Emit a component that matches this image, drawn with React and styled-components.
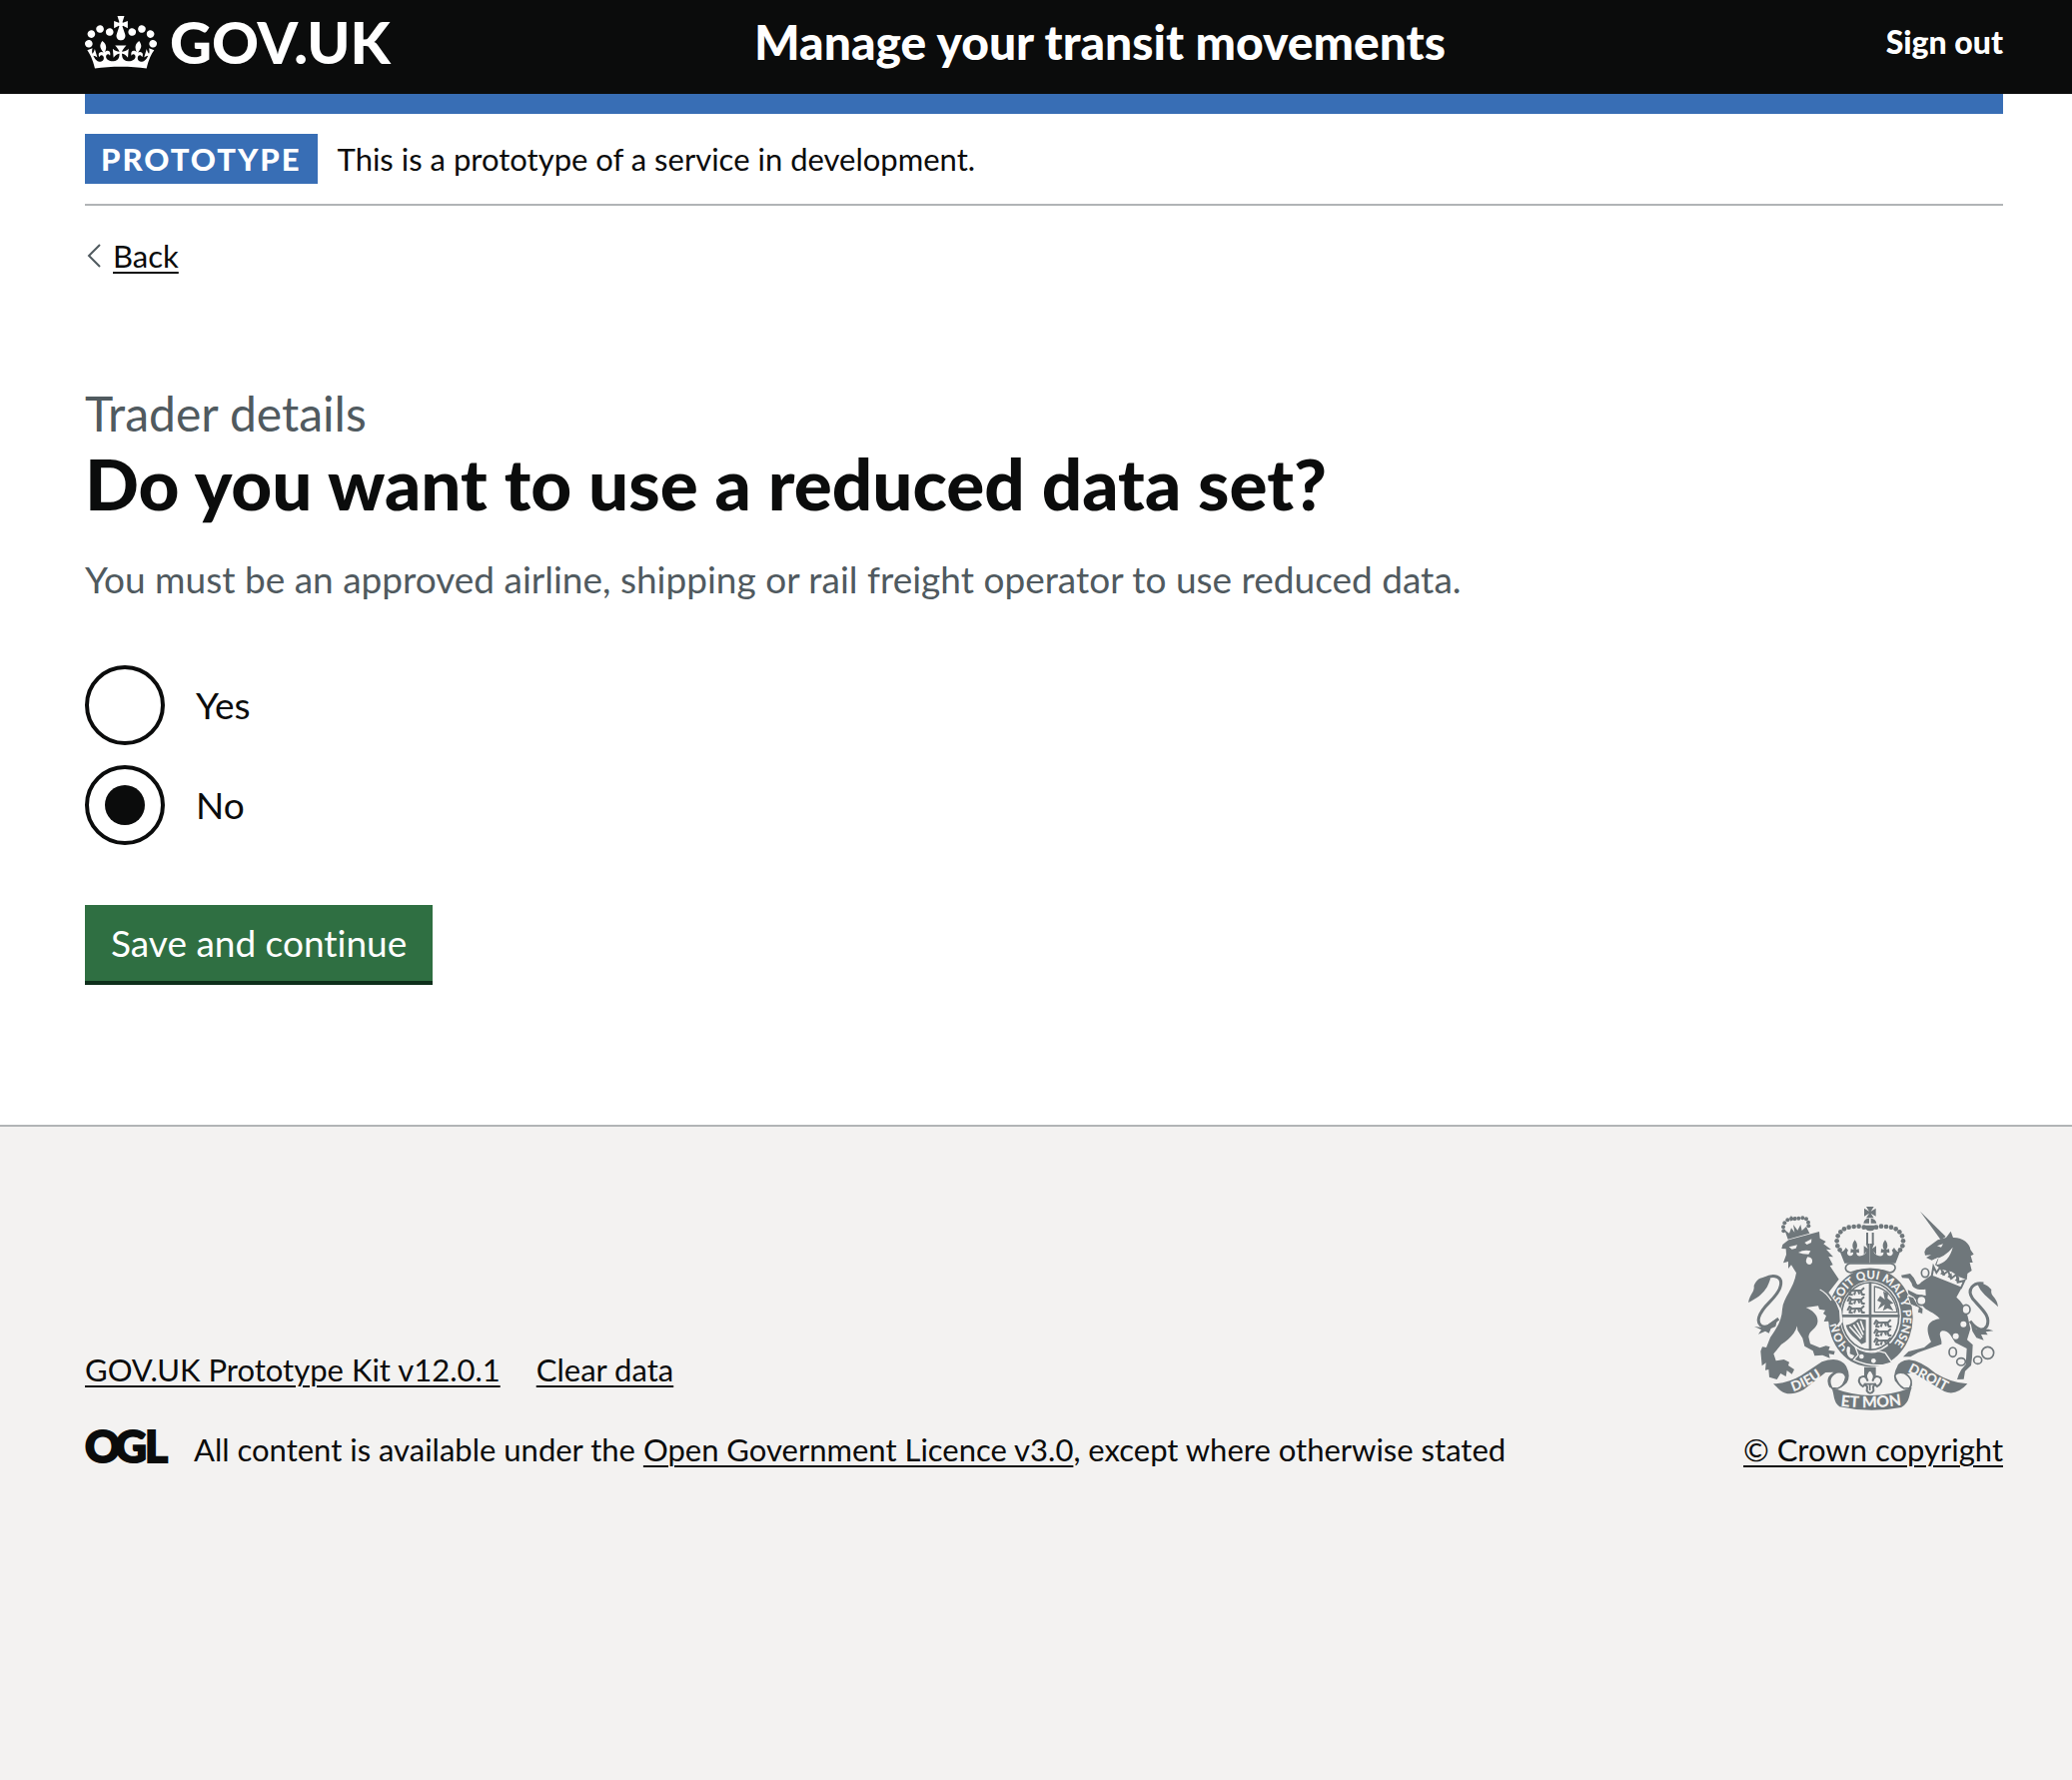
import React from "react";
import styled, { createGlobalStyle } from "styled-components";

const ink = "#0b0c0c";
const blue = "#386eb5";
const grey = "#505a5f";
const rule = "#b1b4b6";
const paper = "#f3f2f1";
const crestGrey = "#6f777b";
const family = 'Lato, "Liberation Sans", sans-serif';

const GlobalStyle = createGlobalStyle`
  *, *::before, *::after { box-sizing: border-box; }
  html { background: ${paper}; }
  body {
    margin: 0;
    background: #fff;
    color: ${ink};
    font-family: ${family};
    font-size: 31px;
    font-variant-ligatures: none;
    line-height: 40px;
  }
  h1, p, ul, fieldset { margin: 0; padding: 0; border: 0; }
`;

const Container = styled.div`
  margin: 0 69px 0 85px;
`;

const Header = styled.header`
  background: ${ink};
  color: #fff;
`;

const HeaderRow = styled(Container)`
  display: grid;
  grid-template-columns: 1fr 2fr;
  align-items: center;
  height: 94px;
  padding-bottom: 10px;
`;

const LogoLink = styled.a`
  display: flex;
  align-items: center;
  gap: 13px;
  color: #fff;
  font-size: 58px;
  font-weight: 900;
  line-height: 70px;
  text-decoration: none;
`;

const HeaderContent = styled.div`
  display: flex;
  align-items: center;
  justify-content: space-between;
  padding-left: 30px;
`;

const HeaderLink = styled.a`
  color: #fff;
  font-size: ${(p) => (p.$title ? 48 : 32)}px;
  font-weight: 900;
  line-height: 60px;
  text-decoration: none;
`;

const BlueBar = styled.div`
  height: 20px;
  background: ${blue};
`;

const PhaseBanner = styled.div`
  display: flex;
  align-items: center;
  gap: 20px;
  padding: 20px 0;
  border-bottom: 2px solid ${rule};
`;

const Tag = styled.strong`
  padding: 0 16px;
  background: ${blue};
  color: #fff;
  font-weight: 900;
  line-height: 50px;
  letter-spacing: 2px;
`;

const Link = styled.a`
  color: ${ink};
  text-decoration: underline;
  text-decoration-thickness: 2px;
  text-underline-offset: 4px;
`;

const BackRow = styled.nav`
  display: flex;
  align-items: center;
  gap: 11px;
  padding-top: 30px;
`;

const Main = styled.main`
  padding: 108px 0 140px;
`;

const Caption = styled.span`
  display: block;
  color: ${grey};
  font-size: 48px;
  font-weight: 400;
  line-height: 60px;
`;

const Heading = styled.h1`
  font-size: 71px;
  font-weight: 900;
  line-height: 80px;
`;

const Hint = styled.p`
  padding: 26px 0 56px;
  color: ${grey};
  font-size: 37px;
  line-height: 60px;
`;

const Radios = styled.div`
  display: grid;
  gap: 20px;
`;

const RadioLabel = styled.label`
  display: flex;
  align-items: center;
  gap: 31px;
  font-size: 37px;
  line-height: 80px;
`;

const Radio = styled.input`
  appearance: none;
  display: grid;
  place-items: center;
  width: 80px;
  height: 80px;
  margin: 0;
  border: 4px solid ${ink};
  border-radius: 50%;
  background: #fff;

  &:checked::before {
    content: "";
    width: 40px;
    height: 40px;
    border-radius: 50%;
    background: ${ink};
  }
`;

const SaveButton = styled.button`
  margin-top: 60px;
  padding: 0 26px;
  border: 0;
  border-bottom: 4px solid #0e2f1b;
  background: #2f6f42;
  color: #fff;
  font-family: inherit;
  font-size: 37px;
  font-variant-ligatures: none;
  line-height: 76px;
`;

const Footer = styled.footer`
  min-height: 600px;
  border-top: 2px solid ${rule};
  background: ${paper};
`;

const FooterRow = styled(Container)`
  display: flex;
  align-items: flex-end;
  justify-content: space-between;
  padding-top: 80px;
`;

const FooterLinks = styled.ul`
  display: flex;
  gap: 36px;
  margin-bottom: 40px;
  list-style: none;
`;

const Licence = styled.div`
  display: flex;
  align-items: center;
  gap: 25px;

  svg { margin: -10px 0; }
`;

const Copyright = styled.div`
  display: grid;
  justify-items: center;
  gap: 19px;
`;

function Crown() {
  return (
    <svg width="72" height="53" viewBox="0 0 132 97" fill="currentColor" aria-hidden="true">
      <path d="M25 30.2c3.5 1.5 7.7-.2 9.1-3.7 1.5-3.6-.2-7.8-3.9-9.2-3.6-1.4-7.6.3-9.1 3.9-1.4 3.5.3 7.5 3.9 9zM9 39.5c3.6 1.5 7.8-.2 9.2-3.7 1.5-3.6-.2-7.8-3.9-9.1-3.6-1.5-7.6.2-9.1 3.8-1.4 3.5.3 7.5 3.8 9zM4.4 57.2c3.5 1.5 7.7-.2 9.1-3.8 1.5-3.6-.2-7.7-3.9-9.1-3.5-1.5-7.6.3-9.1 3.8-1.4 3.5.3 7.6 3.9 9.1zm38.3-21.4c3.5 1.5 7.7-.2 9.1-3.8 1.5-3.6-.2-7.7-3.9-9.1-3.6-1.5-7.6.3-9.1 3.8-1.3 3.6.4 7.7 3.9 9.1zm64.4-5.6c-3.6 1.5-7.8-.2-9.1-3.7-1.5-3.6.2-7.8 3.8-9.2 3.6-1.4 7.7.3 9.2 3.9 1.3 3.5-.4 7.5-3.9 9zm15.9 9.3c-3.6 1.5-7.7-.2-9.1-3.7-1.5-3.6.2-7.8 3.7-9.1 3.6-1.5 7.7.2 9.2 3.8 1.5 3.5-.3 7.5-3.8 9zm4.7 17.7c-3.6 1.5-7.8-.2-9.2-3.8-1.5-3.6.2-7.7 3.9-9.1 3.6-1.5 7.7.3 9.2 3.8 1.3 3.5-.4 7.6-3.9 9.1zM89.3 35.8c-3.6 1.5-7.8-.2-9.2-3.8-1.4-3.6.2-7.7 3.9-9.1 3.6-1.5 7.7.3 9.2 3.8 1.4 3.6-.3 7.7-3.9 9.1zM69.7 17.7l8.9 4.7V9.3l-8.9 2.8c-.2-.3-.5-.6-.9-.9L72.4 0H59.6l3.5 11.2c-.3.3-.6.5-.9.9l-8.8-2.8v13.1l8.8-4.7c.3.3.6.7.9.9l-5 15.4v.1c-.2.8-.4 1.6-.4 2.4 0 4.1 3.1 7.5 7 8.1h.2c.3 0 .7.1 1 .1.4 0 .7 0 1-.1h.2c4-.6 7.1-4.1 7.1-8.1 0-.8-.1-1.7-.4-2.4V34l-5.1-15.4c.4-.2.7-.6 1-.9zM66 92.8c16.9 0 32.8 1.1 47.1 3.2 4-16.9 8.9-26.7 14-33.5l-9.6-3.4c1 4.9 1.1 7.2 0 10.2-1.5-1.4-3-4.3-4.2-8.7L108.6 76c2.8-2 5-3.2 7.5-3.3-4.4 9.4-10 11.9-13.6 11.2-4.3-.8-6.3-4.6-5.6-7.9 1-4.7 5.7-5.9 8-.5 4.3-8.7-3-11.4-7.6-8.8 7.1-7.2 7.9-13.5 2.1-21.1-8 6.1-8.1 12.3-4.5 20.8-4.7-5.4-12.1-2.5-9.5 6.2 3.4-5.2 7.9-2 7.2 3.1-.6 4.3-6.4 7.8-13.5 7.2-10.3-.9-10.9-8-11.2-13.8 2.5-.5 7.1 1.8 11 7.3L80.2 60c-4.1 4.4-8 5.3-12.3 5.4 1.4-4.4 8-11.6 8-11.6H55.5s6.4 7.2 7.9 11.6c-4.2-.1-8-1-12.3-5.4l1.4 16.4c3.9-5.5 8.5-7.7 10.9-7.3-.3 5.8-.9 12.8-11.1 13.8-7.2.6-12.9-2.9-13.5-7.2-.7-5 3.8-8.3 7.1-3.1 2.7-8.7-4.6-11.6-9.4-6.2 3.7-8.5 3.6-14.7-4.6-20.8-5.8 7.6-5 13.9 2.2 21.1-4.7-2.6-11.9.1-7.7 8.8 2.3-5.5 7.1-4.2 8.1.5.7 3.3-1.3 7.1-5.7 7.9-3.5.7-9-1.8-13.5-11.2 2.5.1 4.7 1.3 7.5 3.3l-4.7-15.4c-1.2 4.4-2.7 7.2-4.3 8.7-1.1-3-.9-5.3 0-10.2l-9.5 3.4c5 6.9 9.9 16.7 14 33.5 14.8-2.1 30.8-3.2 47.7-3.2z" />
    </svg>
  );
}

function OglLogo() {
  return (
    <svg width="84" height="60" viewBox="-1 -10 84 60" fill={ink} stroke={ink} strokeWidth="2" fontFamily={family} fontSize="44" fontWeight="900" role="img" aria-label="Open Government Licence">
      <text x="-1 29 59" y="33">OGL</text>
    </svg>
  );
}

const archDots = [
  [404, 116], [389, 113], [374, 114], [359, 116], [345, 121], [334, 130], [326, 142], [323, 157], [325, 172], [332, 184],
];

// One half of the royal crown; the other is its mirror image.
function CrownHalf() {
  return (
    <g>
      {archDots.map(([x, y]) => (
        <circle key={x + "-" + y} cx={x} cy={y} r="7" />
      ))}
      <rect x="411" y="132" width="6" height="34" />
      <path d="M422 224H346L331 186C338 192 343 189 350 177L357 185C352 191 353 197 359 201C367 204 373 199 372 191L364 193L365 181L374 183C367 174 370 163 377 154C384 163 387 174 380 183L389 181L390 193L382 191C381 199 387 204 396 202C406 199 410 194 412 188L404 198V172L416 180L410 165H422Z" />
    </g>
  );
}

function Lions({ x, y }) {
  return (
    <g transform={`translate(${x} ${y})`} fill="none" stroke={crestGrey} strokeWidth="6" strokeLinejoin="round">
      {[0, 27, 54].map((dy) => (
        <path key={dy} d={`M4 ${dy + 14}L10 ${dy + 2}L18 ${dy + 9}L46 ${dy + 7}L54 ${dy}M14 ${dy + 9}L10 ${dy + 20}L20 ${dy + 21}M28 ${dy + 9}L24 ${dy + 21}M43 ${dy + 8}L48 ${dy + 20}L56 ${dy + 20}M36 ${dy + 9}L40 ${dy + 19}`} />
      ))}
    </g>
  );
}

function Garter() {
  return (
    <g>
      <ellipse cx="424" cy="387" rx="127" ry="148" />
      <ellipse cx="424" cy="384" rx="92" ry="107" fill={paper} />
      <ellipse cx="423" cy="383" rx="86" ry="101" fill="none" stroke={crestGrey} strokeWidth="5" />
      <g fill={paper} fontSize="35">
        <text><textPath href="#garterTop">SOIT QUI MAL Y PENSE</textPath></text>
        <text><textPath href="#garterLeft">HON</textPath></text>
      </g>
      <path d="M336 378H511V386H427V485H419V386H336Z" />
      <path d="M419 281H427V378H419Z" />
      <Lions x={351} y={298} />
      <Lions x={431} y={394} />
      <path d="M436 294C472 300 498 329 504 371H436Z" fill="none" stroke={crestGrey} strokeWidth="4" />
      <path d="M446 362L456 342L444 336L453 322L467 333L462 309L477 314L475 329L493 344L482 347L493 367L475 359L461 367L467 348Z" />
      <path d="M350 410C366 408 377 400 387 391L410 394V461L397 467C381 449 357 438 350 410Z" />
      <path d="M361 414L395 451M373 409L399 447M384 402L402 439M394 397L404 425" stroke={paper} strokeWidth="5" />
      <path d="M366 476Q350 462 349 487Q352 513 371 514L380 500L365 494Z" fill={paper} stroke={crestGrey} strokeWidth="6" />
      <path d="M378 475L393 484Q425 497 448 488L468 493L488 522Q435 542 374 514L387 499Z" stroke={paper} strokeWidth="4" />
      <circle cx="397" cy="504" r="7" fill={paper} />
      <circle cx="433" cy="517" r="7" fill={paper} />
    </g>
  );
}

function Lion() {
  return (
    <g>
      <path d="M57 342C63 312 76 313 74 291C84 266 102 263 124 268C118 288 110 318 57 342Z" />
      <path d="M105 270C135 255 160 264 154 291C147 329 100 347 89 386C83 408 99 421 119 411L148 391" fill="none" stroke={crestGrey} strokeWidth="9" />
      <path d="M75 414L104 418L145 388L139 414L125 420L119 434L108 428L87 437L96 424Z" />
      <path d="M331 272L306 300M274 303C300 316 323 345 332 367L335 399L324 413" fill="none" stroke={paper} strokeWidth="10" />
      <path d="M160 168L178 154L270 129L272 149L290 159L283 166L306 183L291 182L312 205L298 204L311 229L302 232L329 272L298 312L320 342L330 367L332 398L323 411L317 402L305 411L298 398L284 399L291 382L282 375L288 365L270 362L267 352L230 357C249 365 268 380 265 401C263 421 240 424 238 445L243 466L272 478L290 472L302 475L298 485L317 488L314 499L299 496L302 509L280 500L256 502L251 487L226 473L220 449L205 425L203 405L207 370C212 421 190 445 156 468L133 496L140 517L164 513L180 521L177 531L195 543L188 557L173 546L170 564L154 555L143 573L120 566L118 543L108 545L110 523L98 532L94 488L99 475L111 477L123 447C145 416 158 392 159 362C162 327 194 300 201 253L186 229L177 240L177 219L162 223L171 198L170 181L157 180Z" />
      <g fill={paper}>
        <path d="M179 175L204 169L200 179L188 182ZM226 162L247 151L246 162L233 168Z" />
        <path d="M207 192Q224 182 244 187L238 197L221 196ZM235 205Q251 206 249 221Q244 232 234 226Q226 218 235 205Z" />
      </g>
      <path d="M272 303C288 311 297 322 306 336" fill="none" stroke={paper} strokeWidth="4" />
      <path d="M176 152L166 124L180 134L186 118L196 131L192 108L205 125L214 108L218 126L231 114L241 134Z" />
      {[[163, 127], [162, 115], [166, 103], [175, 94], [186, 90], [197, 90], [208, 89], [220, 88], [231, 91], [237, 101], [238, 112]].map(([x, y]) => (
        <circle key={x + "-" + y} cx={x} cy={y} r="6" />
      ))}
      <path d="M185 80L191 88L200 84L198 97L191 94L184 98Z" />
    </g>
  );
}

function Unicorn() {
  return (
    <g>
      <path d="M807 355C804 323 783 326 787 303C773 286 760 284 745 285C754 313 776 325 807 355Z" />
      <path d="M763 285C734 280 711 302 731 331C759 363 785 382 774 412C763 432 742 423 723 398" fill="none" stroke={crestGrey} strokeWidth="9" />
      <path d="M725 405L742 422L779 422L793 427L770 430L776 439L756 438L764 455L742 448L730 428Z" />
      <path d="M573 68L650 144L635 154Z" />
      <path d="M586 190L591 179L626 154L651 147L665 128L672 147C700 146 723 165 724 183L734 197L725 202L731 222L722 222L728 246L715 255L713 274L690 265L668 250L639 243L618 229L628 206L608 215L591 207L606 199L588 200Z" />
      <path d="M624 172L642 166L636 176Z" fill={paper} />
      <path d="M608 215Q648 206 671 176Q660 221 622 229L629 207Z" fill={paper} />
      <path d="M613 234L622 252L634 235L643 258L657 247L666 270L683 257L686 281L706 276L696 298L608 263Z" fill={paper} stroke={crestGrey} strokeWidth="6" />
      <path d="M633 256L644 246L648 262ZM655 265L667 253L670 272ZM677 275L690 263L691 281Z" />
      <path d="M606 260L697 299L682 326C714 353 717 389 724 421L714 454L731 469L729 506L726 531L708 548L704 572L684 573L689 558L697 543L710 528L713 480L678 462C663 440 661 428 641 427C622 432 641 453 637 467L567 492L544 505L522 505L538 489L585 477L606 460C585 413 598 396 632 391C617 371 589 367 580 351L550 324L538 316L536 304L563 317L590 321L589 302C570 306 549 300 548 285L538 269L519 268L516 260L543 255L554 268L565 289Z" />
      <path d="M535 321L553 326L566 349L582 360L581 377L565 372L568 358L544 348Z" stroke={paper} strokeWidth="3" />
      <g fill={paper} stroke={crestGrey} strokeWidth="5">
        <ellipse cx="588" cy="253" rx="11" ry="13" />
        <ellipse cx="577" cy="336" rx="14" ry="14" />
        <ellipse cx="711" cy="363" rx="12" ry="14" />
        <ellipse cx="671" cy="491" rx="11" ry="14" />
        <ellipse cx="696" cy="520" rx="13" ry="11" />
        <ellipse cx="746" cy="515" rx="12" ry="11" />
        <circle cx="776" cy="493" r="18" />
      </g>
      <g fill={paper}>
        <circle cx="568" cy="280" r="7" />
        <circle cx="703" cy="407" r="9" />
        <circle cx="680" cy="443" r="9" />
      </g>
    </g>
  );
}

function RoyalCrown() {
  return (
    <g>
      <path d="M411 54H434L425 68L440 59V83L425 74L434 88H411L420 74L405 83V59L420 68Z" />
      <path d="M403 104Q405 89 420 89V104ZM425 89Q440 90 442 104H425ZM403 110H442Q439 126 423 127Q407 126 403 110Z" />
      <CrownHalf />
      <g transform="translate(845 0) scale(-1 1)"><CrownHalf /></g>
      <path d="M362 225H484Q499 227 498 239Q495 251 482 252Q422 230 365 252Q349 250 349 238Q350 227 362 225Z" fill={paper} stroke={crestGrey} strokeWidth="5" />
    </g>
  );
}

function Motto() {
  return (
    <g>
      <path d="M132 586Q178 584 216 561L278 520Q330 501 351 533Q366 562 353 583Q337 601 315 600L301 597Q285 568 313 551L289 552L223 604Q180 627 153 606Z" />
      <path d="M715 586Q668 584 620 555Q577 518 540 514Q508 517 503 537Q493 554 497 577Q511 598 545 600Q555 579 530 557L551 552L646 609Q681 624 715 586Z" />
      <path d="M308 599Q291 568 322 552Q346 548 350 566Q345 594 325 600ZM541 599Q557 573 526 554Q502 549 497 563Q505 589 524 600Z" fill={paper} stroke={crestGrey} strokeWidth="5" />
      <path d="M307 597Q370 621 424 621Q485 621 548 597C539 618 544 641 516 657Q422 675 331 655C311 640 316 618 307 597Z" />
      <g fill={paper} fontSize="41">
        <text><textPath href="#ribbonLeft">DIEU</textPath></text>
        <text><textPath href="#ribbonRight">DROIT</textPath></text>
        <text fontSize="47"><textPath href="#ribbonMid">ET MON</textPath></text>
      </g>
      <path d="M405 536H440V564H405Z" />
      <path d="M422 543Q442 560 430 578Q438 556 454 568Q462 583 444 594L437 588L432 595L433 607Q423 622 413 607L414 595L408 588L401 594Q384 583 392 568Q408 556 416 578Q403 560 422 543Z" fill={paper} stroke={crestGrey} strokeWidth="6" />
      <path d="M404 587H441M422 588V606" fill="none" stroke={crestGrey} strokeWidth="5" />
    </g>
  );
}

function Crest() {
  return (
    <svg width="250" height="204" viewBox="57 54 750 612" fill={crestGrey} fontFamily={family} fontWeight="900" role="img" aria-label="Royal coat of arms">
      <defs>
        <path id="garterTop" d="M332 346A98 115 0 0 1 522 386A98 115 0 0 1 424 501" />
        <path id="garterLeft" d="M362 475A98 115 0 0 1 327 398" />
        <path id="ribbonLeft" d="M192 609Q248 591 303 544" />
        <path id="ribbonRight" d="M535 549Q590 577 652 610" />
        <path id="ribbonMid" d="M334 653Q422 664 514 650" />
      </defs>
      <Garter />
      <Lion />
      <Unicorn />
      <RoyalCrown />
      <Motto />
    </svg>
  );
}

function Chevron() {
  return (
    <svg width="17" height="24" viewBox="0 0 17 24" fill="none" stroke={grey} strokeWidth="2" aria-hidden="true">
      <path d="M15 1L4 12L15 23" />
    </svg>
  );
}

export default function App() {
  return (
    <>
      <GlobalStyle />
      <Header>
        <HeaderRow>
          <LogoLink href="#"><Crown />GOV.UK</LogoLink>
          <HeaderContent>
            <HeaderLink href="#" $title>Manage your transit movements</HeaderLink>
            <HeaderLink href="#">Sign out</HeaderLink>
          </HeaderContent>
        </HeaderRow>
      </Header>
      <Container>
        <BlueBar />
        <PhaseBanner>
          <Tag>PROTOTYPE</Tag>
          <span>This is a prototype of a service in development.</span>
        </PhaseBanner>
        <BackRow>
          <Chevron />
          <Link href="#">Back</Link>
        </BackRow>
        <Main>
          <form onSubmit={(e) => e.preventDefault()}>
            <fieldset aria-labelledby="question" aria-describedby="hint">
              <Caption>Trader details</Caption>
              <Heading id="question">Do you want to use a reduced data set?</Heading>
              <Hint id="hint">You must be an approved airline, shipping or rail freight operator to use reduced data.</Hint>
              <Radios>
                <RadioLabel htmlFor="reduced-yes">
                  <Radio type="radio" id="reduced-yes" name="reduced" value="yes" />
                  Yes
                </RadioLabel>
                <RadioLabel htmlFor="reduced-no">
                  <Radio type="radio" id="reduced-no" name="reduced" value="no" defaultChecked />
                  No
                </RadioLabel>
              </Radios>
            </fieldset>
            <SaveButton type="submit">Save and continue</SaveButton>
          </form>
        </Main>
      </Container>
      <Footer>
        <FooterRow>
          <div>
            <FooterLinks>
              <li><Link href="#">GOV.UK Prototype Kit v12.0.1</Link></li>
              <li><Link href="#">Clear data</Link></li>
            </FooterLinks>
            <Licence>
              <OglLogo />
              <span>
                All content is available under the <Link href="#">Open Government Licence v3.0</Link>, except where otherwise stated
              </span>
            </Licence>
          </div>
          <Copyright>
            <Crest />
            <Link href="#">© Crown copyright</Link>
          </Copyright>
        </FooterRow>
      </Footer>
    </>
  );
}
